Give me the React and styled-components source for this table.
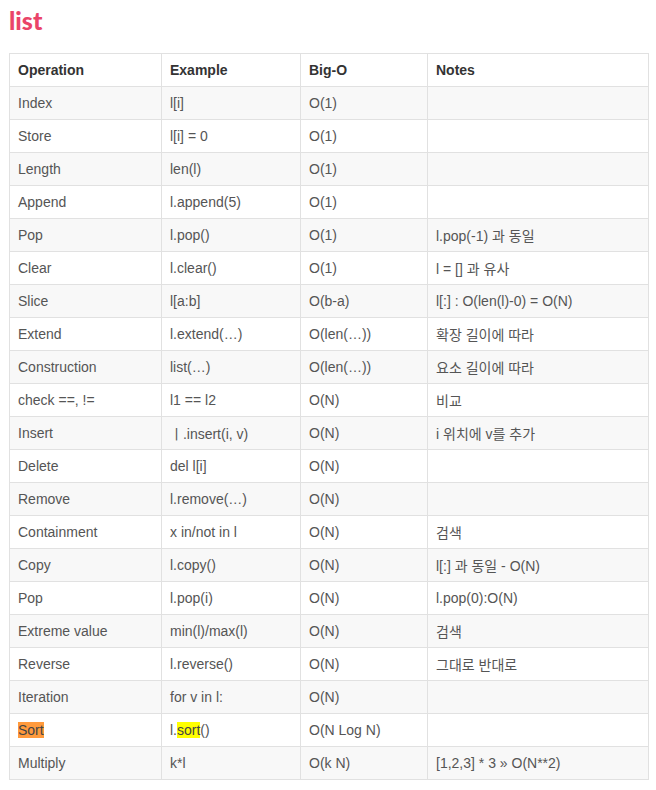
import React from "react";
import styled, { createGlobalStyle } from "styled-components";

const GlobalStyle = createGlobalStyle`
    body {
        margin: 0;
        background: #ffffff;
        font-family: "Liberation Sans", Arial, "Noto Sans CJK KR", sans-serif;
    }
`;

const rows = [
    ["Index", "l[i]", "O(1)", ""],
    ["Store", "l[i] = 0", "O(1)", ""],
    ["Length", "len(l)", "O(1)", ""],
    ["Append", "l.append(5)", "O(1)", ""],
    ["Pop", "l.pop()", "O(1)", "l.pop(-1) 과 동일"],
    ["Clear", "l.clear()", "O(1)", "l = [] 과 유사"],
    ["Slice", "l[a:b]", "O(b-a)", "l[:] : O(len(l)-0) = O(N)"],
    ["Extend", "l.extend(…)", "O(len(…))", "확장 길이에 따라"],
    ["Construction", "list(…)", "O(len(…))", "요소 길이에 따라"],
    ["check ==, !=", "l1 == l2", "O(N)", "비교"],
    ["Insert", "ㅣ.insert(i, v)", "O(N)", "i 위치에 v를 추가"],
    ["Delete", "del l[i]", "O(N)", ""],
    ["Remove", "l.remove(…)", "O(N)", ""],
    ["Containment", "x in/not in l", "O(N)", "검색"],
    ["Copy", "l.copy()", "O(N)", "l[:] 과 동일 - O(N)"],
    ["Pop", "l.pop(i)", "O(N)", "l.pop(0):O(N)"],
    ["Extreme value", "min(l)/max(l)", "O(N)", "검색"],
    ["Reverse", "l.reverse()", "O(N)", "그대로 반대로"],
    ["Iteration", "for v in l:", "O(N)", ""],
    ["SORT", "SORT", "O(N Log N)", ""],
    ["Multiply", "k*l", "O(k N)", "[1,2,3] * 3 » O(N**2)"],
];

function renderCell(value, col) {
    if (value === "SORT" && col === 0) return <Mark $color="#ff9a3c">Sort</Mark>;
    if (value === "SORT" && col === 1)
        return (
            <>
                l.<Mark $color="#ffff00">sort</Mark>()
            </>
        );
    return value;
}

export default function App() {
    return (
        <Page>
            <GlobalStyle />
            <Title>list</Title>
            <Table>
                <colgroup>
                    <col style={{ width: 152 }} />
                    <col style={{ width: 139 }} />
                    <col style={{ width: 127 }} />
                    <col />
                </colgroup>
                <thead>
                    <tr>
                        <HeadCell>Operation</HeadCell>
                        <HeadCell>Example</HeadCell>
                        <HeadCell>Big-O</HeadCell>
                        <HeadCell>Notes</HeadCell>
                    </tr>
                </thead>
                <tbody>
                    {rows.map((row, i) => (
                        <Row key={i} $shaded={i % 2 === 0}>
                            {row.map((value, col) => (
                                <Cell key={col}>{renderCell(value, col)}</Cell>
                            ))}
                        </Row>
                    ))}
                </tbody>
            </Table>
        </Page>
    );
}

const Page = styled.div`
    padding: 5px 8px 10px 9px;
`;

const Title = styled.h2`
    margin: 0 0 18px 0;
    font-family: "Lato", "Liberation Sans", sans-serif;
    font-weight: 900;
    font-size: 25px;
    line-height: 30px;
    color: #ea4469;
`;

const Table = styled.table`
    width: 640px;
    border-collapse: collapse;
    table-layout: fixed;
    font-size: 14px;
`;

const HeadCell = styled.th`
    height: 32px;
    padding: 0 8px;
    border: 1px solid #e1e1e1;
    text-align: left;
    font-weight: 700;
    font-size: 14px;
    color: #333333;
    background: #ffffff;
`;

const Row = styled.tr`
    background: ${(p) => (p.$shaded ? "#f8f8f8" : "#ffffff")};
`;

const Cell = styled.td`
    height: 32px;
    padding: 0 8px;
    border: 1px solid #e1e1e1;
    color: #555555;
    white-space: nowrap;
`;

const Mark = styled.span`
    background: ${(p) => p.$color};
    color: #444444;
`;
